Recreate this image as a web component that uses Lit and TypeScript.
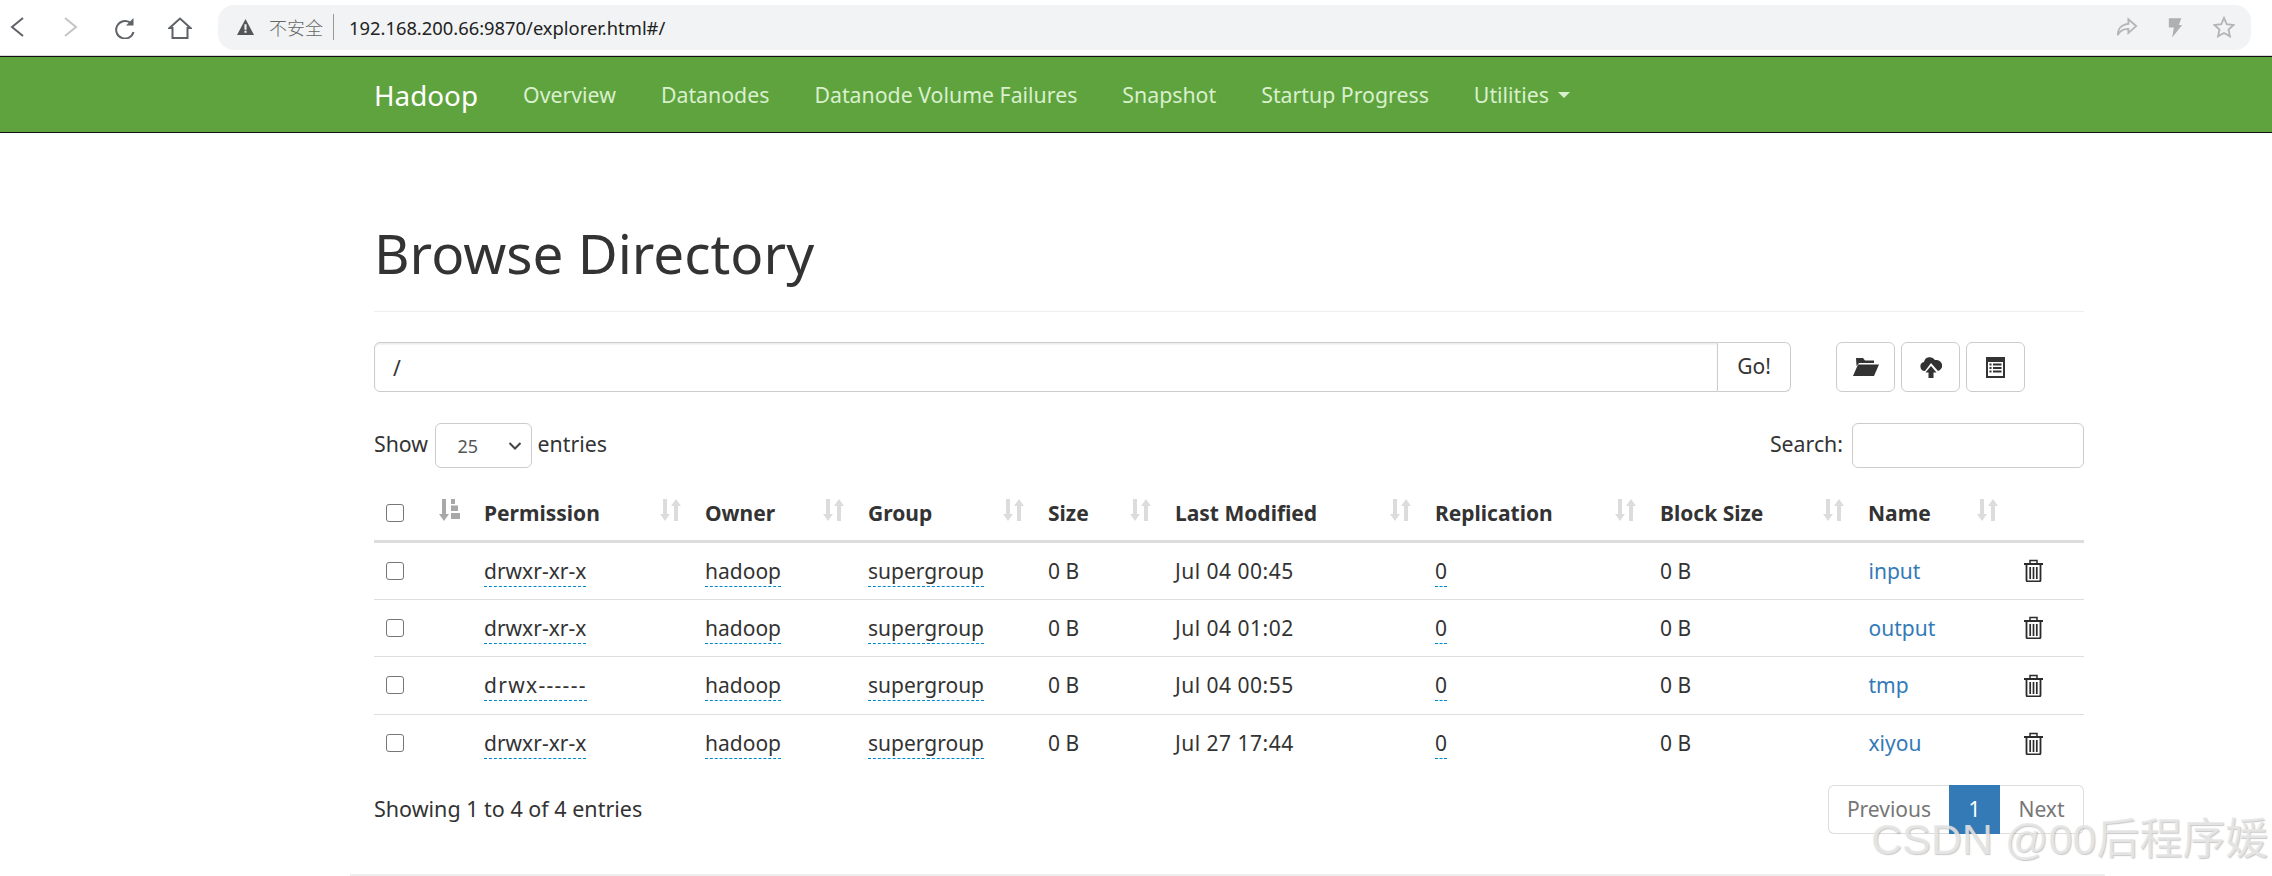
import { LitElement, html, css } from "lit";
import { customElement } from "lit/decorators.js";

const rows = [
  ["drwxr-xr-x", "Jul 04 00:45", "input", ""],
  ["drwxr-xr-x", "Jul 04 01:02", "output", ""],
  ["drwx------", "Jul 04 00:55", "tmp", "dashes"],
  ["drwxr-xr-x", "Jul 27 17:44", "xiyou", ""],
];
const cols = [
  ["Permission", 221],
  ["Owner", 163],
  ["Group", 180],
  ["Size", 127],
  ["Last Modified", 260],
  ["Replication", 225],
  ["Block Size", 208],
  ["Name", 154],
] as const;

const sortIcon = html`<svg class="sort" viewBox="0 0 21 22" width="21" height="22">
  <path fill="#dcdcdc" d="M3 0h4v15h3l-5 7-5-7h3zM16 0l5 7h-3v15h-4V7h-3z"/>
</svg>`;
const sortedIcon = html`<svg class="sort" viewBox="0 0 21 22" width="21" height="22">
  <path fill="#a8a8a8" d="M3 0h4v15h3l-5 7-5-7h3zM12 0h4v5h-4zM12 6.500h7v5.500h-7zM12 14h9v6h-9z"/>
</svg>`;
const trash = html`<svg class="trash" viewBox="0 0 19 23" width="19" height="23" fill="none" stroke="#2b2b2b" stroke-width="1.700">
  <path d="M0 5h19" stroke-width="2"/><path d="M6 4.500V1.500h7v3" stroke-width="1.500"/>
  <path d="M2.500 5.500v15.500a1.500 1.500 0 0 0 1.500 1.500h11a1.500 1.500 0 0 0 1.500-1.500V5.500" stroke-width="1.800"/>
  <path d="M6.200 8v12M9.500 8v12M12.800 8v12"/>
</svg>`;

@customElement("app-root")
export class AppRoot extends LitElement {
  static styles = css`
    :host { display: block; width: 2272px; height: 876px; overflow: hidden; position: relative; background: #fff;
      font-family: "Noto Sans", "Open Sans", "Noto Sans CJK SC", sans-serif; font-size: 21px; color: #333; }
    .chrome { height: 55px; display: flex; align-items: center; background: #fff; border-bottom: 1px solid #d8d8d8; }
    .navbtns { display: flex; width: 218px; flex: none; box-sizing: border-box; }
    .navbtn { width: 54.300px; display: flex; justify-content: center; flex: none; }
    .navbtn:first-child { margin-left: -10.500px; }
    .omni { width: 2033px; height: 45px; border-radius: 16px; background: #f1f3f4; display: flex; align-items: center; margin-top: -1px; flex: none; padding-left: 19px; box-sizing: border-box; font-size: 18.350px; }
    .warn { margin-right: 15px; flex: none; }
    .unsafe { color: #666; font-family: "Noto Sans CJK SC", sans-serif; font-size: 18px; font-weight: 300; }
    .sep { width: 1px; height: 26px; background: #999; margin: 0 15px 0 10px; }
    .url { color: #222; flex: 1; }
    .omni-icons { display: flex; gap: 30px; align-items: center; margin-right: 16px; }
    .nav { height: 77px; box-sizing: border-box; background: #5fa33e; border-top: 1px solid #111; border-bottom: 1.500px solid #111; display: flex; align-items: center; padding-left: 374px; }
    .brand { color: #fff; font-size: 27.800px; margin-right: 45px; }
    .nav a { color: #d9f0cd; font-size: 21.300px; margin-right: 45px; display: flex; align-items: center; }
    .caret { width: 0; height: 0; border-left: 6px solid transparent; border-right: 6px solid transparent; border-top: 6px solid currentColor; margin-left: 9px; }
    .main { margin-left: 374px; width: 1710px; }
    h1 { margin: 0; height: 179px; box-sizing: border-box; border-bottom: 1px solid #eee; font-size: 54.800px; font-weight: 400; line-height: 1; padding-top: 93px; }
    .path { display: flex; margin-top: 30px; height: 50px; }
    .path .in { width: 1344px; box-sizing: border-box; border: 1.500px solid #ccc; border-radius: 6px 0 0 6px; padding-left: 18px; line-height: 51px; box-shadow: inset 0 1.500px 1.500px rgba(0,0,0,.08); }
    .go { width: 73px; border: 1.500px solid #ccc; border-left: 0; border-radius: 0 6px 6px 0; box-sizing: border-box; text-align: center; line-height: 46px; }
    .tools { display: flex; gap: 6px; margin-left: 45px; }
    .tool { width: 59px; height: 50px; border: 1.500px solid #ccc; border-radius: 6px; box-sizing: border-box; display: flex; align-items: center; justify-content: center; }
    .filters { display: flex; justify-content: space-between; align-items: center; margin-top: 31px; height: 45px; }
    .show, .search { display: flex; align-items: center; font-size: 21.300px; }
    .lbl { padding-bottom: 5px; }
    .sel { width: 97px; height: 45px; margin: 0 6px 0 6.500px; border: 1.500px solid #ccc; border-radius: 6px; box-sizing: border-box; display: flex; align-items: center; justify-content: space-between; padding: 0 9px 0 22px; font-size: 18px; color: #555; }
    .sbox { width: 232px; height: 45px; border: 1.500px solid #ccc; border-radius: 6px; box-sizing: border-box; margin-left: 9px; }
    table { border-collapse: collapse; table-layout: fixed; width: 1710px; margin-top: 18.500px; }
    th { text-align: left; font-weight: 700; height: 55px; border-bottom: 3px solid #ddd; padding: 0 12px; position: relative; box-sizing: border-box; }
    td { height: 57.500px; border-bottom: 1.500px solid #ddd; padding: 0 12px; box-sizing: border-box; font-weight: 400; }
    tr:last-child td { border-bottom: 0; }
    .sort { position: absolute; right: 12px; top: 12px; }
    .trash { display: block; margin-left: 2px; }
    .chk { display: block; width: 18px; height: 18px; border: 1.500px solid #767676; border-radius: 3px; box-sizing: border-box; background: #fff; }
    .tip { border-bottom: 1.500px dashed #08c; padding-bottom: 1px; }
    .dashes { letter-spacing: 1.300px; }
    .date { letter-spacing: .5px; }
    .link { color: #337ab7; padding-left: .5px; }
    .foot { display: flex; justify-content: space-between; align-items: center; margin-top: 13px; height: 49px; }
    .count { font-size: 21.500px; padding-bottom: 2px; }
    .pager { display: flex; height: 49px; }
    .pager div { display: flex; align-items: center; justify-content: center; box-sizing: border-box; color: #777; }
    .prev { width: 121px; border: 1.500px solid #ddd; border-right: 0; border-radius: 6px 0 0 6px; }
    .pager .cur { width: 51px; background: #337ab7; color: #fff; }
    .next { width: 84px; border: 1.500px solid #ddd; border-left: 0; border-radius: 0 6px 6px 0; }
    .rule { position: absolute; left: 350px; width: 1755px; top: 874px; height: 1.500px; background: #eee; }
    .mark { position: absolute; left: 1871px; top: 814px; font-family: "Liberation Sans", "Noto Sans CJK SC", sans-serif; font-size: 43px; line-height: 50px; color: rgba(232,232,232,.85); text-shadow: 1px 1px 1px rgba(120,120,120,.4); white-space: nowrap; }
  `;

  render() {
    return html`
      <div class="chrome">
        <div class="navbtns">
          <div class="navbtn"><svg width="14" height="20" viewBox="0 0 14 20" fill="none" stroke="#5f6368" stroke-width="2"><path d="M13 1 2 10l11 9"/></svg></div>
          <div class="navbtn"><svg width="14" height="20" viewBox="0 0 14 20" fill="none" stroke="#c4c4c4" stroke-width="2"><path d="m1 1 11 9-11 9"/></svg></div>
          <div class="navbtn"><svg width="20" height="22" viewBox="0 0 20 22" fill="none" stroke="#5f6368" stroke-width="2"><path d="M15 5.500A8.800 8.800 0 1 0 18.500 15"/><path fill="#5f6368" stroke="none" d="M18.500 1v7.500H11z"/></svg></div>
          <div class="navbtn"><svg width="24" height="22" viewBox="0 0 24 22" fill="none" stroke="#5f6368" stroke-width="2"><path d="M1.500 11 12 1.500 22.500 11H19.500v10h-15V11z"/></svg></div>
        </div>
        <div class="omni">
          <svg class="warn" width="17" height="16" viewBox="0 0 16 15"><path fill="#555" d="M8 0l8 15H0z"/><path fill="#f1f3f4" d="M7 5h2v5H7zM7 11h2v2H7z"/></svg>
          <span class="unsafe">不安全</span><span class="sep"></span>
          <span class="url">192.168.200.66:9870/explorer.html#/</span>
          <div class="omni-icons">
            <svg width="22" height="24" viewBox="0 0 24 24" fill="none" stroke="#b5b5b5" stroke-width="2"><path d="M13.500 3.500 22 11l-8.500 7.500V14C8 14 4 16 2 21c0-7 4-12 11.500-12.500z"/></svg>
            <svg width="15" height="23" viewBox="0 0 18 24"><path fill="#b0b0b0" d="M1 1h15l-3 8h4L5 24l2-12H1z"/></svg>
            <svg width="22" height="22" viewBox="0 0 24 24" fill="none" stroke="#b5b5b5" stroke-width="2"><path d="m12 2 3 7 7.500.8-5.600 5 1.600 7.400L12 18.500 5.500 22.200l1.600-7.400-5.600-5L9 9z"/></svg>
          </div>
        </div>
      </div>
      <div class="nav">
        <span class="brand">Hadoop</span>
        <a>Overview</a><a>Datanodes</a><a>Datanode Volume Failures</a><a>Snapshot</a><a>Startup Progress</a><a>Utilities<span class="caret"></span></a>
      </div>
      <div class="main">
        <h1>Browse Directory</h1>
        <div class="path">
          <div class="in">/</div><div class="go">Go!</div>
          <div class="tools">
            <div class="tool"><svg width="26" height="18" viewBox="0 0 26 18"><path fill="#333" d="M3 0h7l2 2.500h9V5H6L3.500 8zM5 6.500h21L21 18H0z"/></svg></div>
            <div class="tool"><svg width="22" height="21" viewBox="0 0 22 21"><path fill="#333" d="M5 14a4.500 4.500 0 0 1-1-8.900 6 6 0 0 1 11-2A5 5 0 0 1 18 14L11 6z"/><path fill="#333" d="M11 9l5.500 6.500H13.500V21h-5v-5.500H5.500z"/></svg></div>
            <div class="tool"><svg width="19" height="21" viewBox="0 0 19 21"><path fill="#333" d="M0 0h19v21H0zM2 5v14h15V5z"/><path fill="#333" d="M3.500 6.500h2v2h-2zM7 6.500h8.500v2H7zM3.500 10h2v2h-2zM7 10h8.500v2H7zM3.500 13.500h2v2h-2zM7 13.500h8.500v2H7z"/></svg></div>
          </div>
        </div>
        <div class="filters">
          <div class="show"><span class="lbl">Show</span><div class="sel">25<svg width="14" height="8" viewBox="0 0 14 8" fill="none" stroke="#444" stroke-width="2"><path d="m1.500 1 5.500 5.500L12.500 1"/></svg></div><span class="lbl">entries</span></div>
          <div class="search"><span class="lbl">Search:</span><div class="sbox"></div></div>
        </div>
        <table>
          <colgroup><col style="width:50px"><col style="width:48px">${cols.map((c) => html`<col style="width:${c[1]}px">`)}<col style="width:74px"></colgroup>
          <thead><tr>
            <th><span class="chk"></span></th>
            <th>${sortedIcon}</th>
            ${cols.map((c) => html`<th>${c[0]}${sortIcon}</th>`)}
            <th></th>
          </tr></thead>
          <tbody>
            ${rows.map((r) => html`<tr>
              <td><span class="chk"></span></td><td></td>
              <td><span class="tip ${r[3]}">${r[0]}</span></td>
              <td><span class="tip">hadoop</span></td>
              <td><span class="tip">supergroup</span></td>
              <td>0 B</td>
              <td><span class="date">${r[1]}</span></td>
              <td><span class="tip">0</span></td>
              <td>0 B</td>
              <td><a class="link">${r[2]}</a></td>
              <td>${trash}</td>
            </tr>`)}
          </tbody>
        </table>
        <div class="foot">
          <div class="count">Showing 1 to 4 of 4 entries</div>
          <div class="pager"><div class="prev">Previous</div><div class="cur">1</div><div class="next">Next</div></div>
        </div>
      </div>
      <div class="rule"></div>
      <div class="mark">CSDN @00后程序媛</div>
    `;
  }
}
